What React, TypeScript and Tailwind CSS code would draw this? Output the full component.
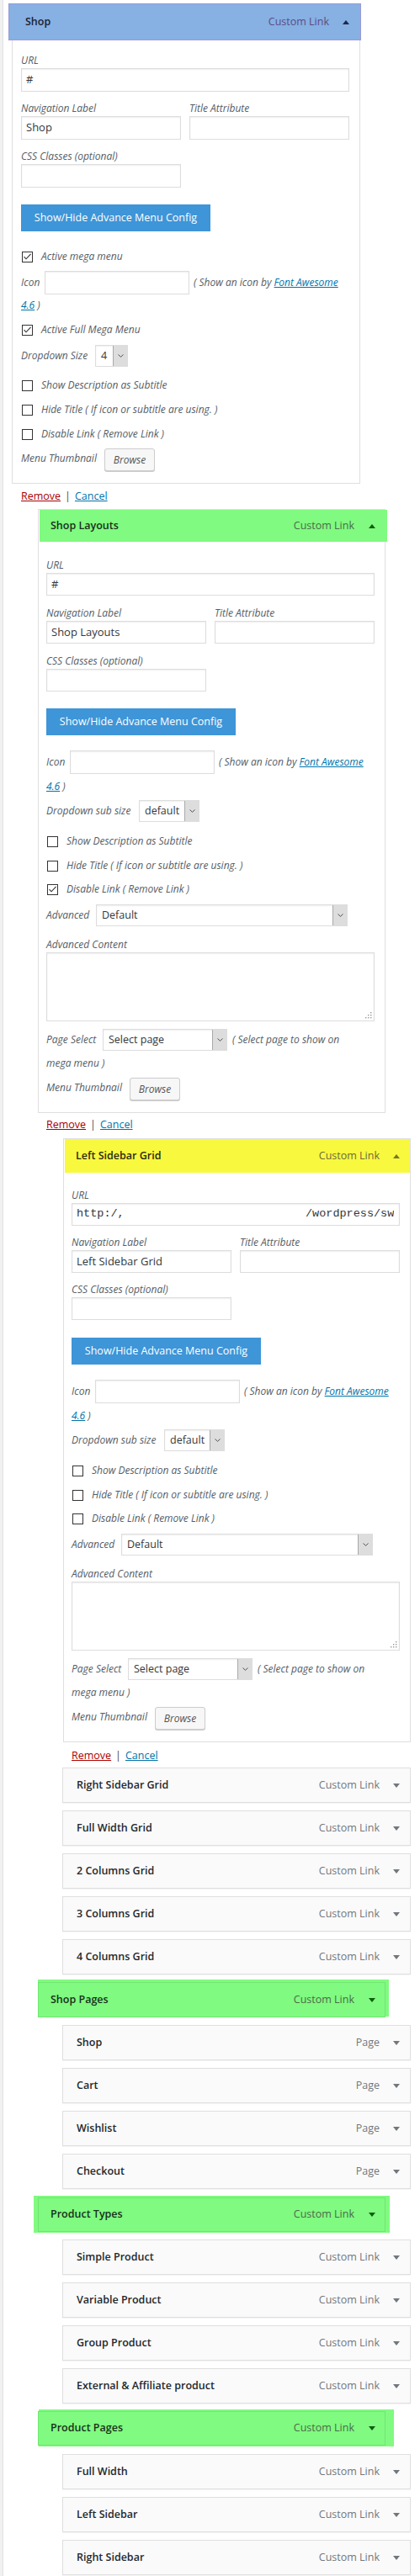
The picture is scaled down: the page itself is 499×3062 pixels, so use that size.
import React from "react";

const Tri = ({ up, color }: { up?: boolean; color: string }) => (
  <svg width="8" height="5" viewBox="0 0 8 5" className="shrink-0">
    <path d={up ? "M0 5L4 0L8 5Z" : "M0 0L8 0L4 5Z"} fill={color} />
  </svg>
);

function Check({ checked }: { checked?: boolean }) {
  return (
    <span className="ml-[1px] flex h-[13px] w-[13px] shrink-0 items-center justify-center border border-[#333] bg-white">
      {checked && (
        <svg width="11" height="11" viewBox="0 0 11 11">
          <path d="M1.5 5.2L4 7.8L9.6 1.8" fill="none" stroke="#333" strokeWidth="1.1" />
        </svg>
      )}
    </span>
  );
}

const LBL = "text-[12px] italic text-[#555d66] whitespace-nowrap";

function Label({ children }: { children: React.ReactNode }) {
  return <div className={`h-[18px] leading-[18px] ${LBL}`}>{children}</div>;
}

function TextInput({ h, children, mono }: { h: string; children?: React.ReactNode; mono?: boolean }) {
  return (
    <div
      className={`${h} flex items-center border border-[#ddd] bg-white pl-[5px] pr-[6px] shadow-[inset_0_1px_2px_rgba(0,0,0,0.07)] ${
        mono ? "font-['Liberation_Mono',monospace] text-[13.5px]" : "text-[13px]"
      } text-[#32373c]`}
    >
      <div className="flex w-full overflow-hidden whitespace-nowrap">{children}</div>
    </div>
  );
}

function Select({ w, value }: { w: string; value: string }) {
  return (
    <div className={`${w} flex h-[26px] shrink-0 border border-[#ddd] bg-white shadow-[inset_0_1px_2px_rgba(0,0,0,0.07)]`}>
      <span className="flex flex-1 items-center pl-[6px] text-[12.5px] text-[#32373c]">{value}</span>
      <span className="flex w-[17px] items-center justify-center border-l border-[#a9a9a9] bg-[#dddddd]">
        <svg width="7" height="4" viewBox="0 0 7 4">
          <path d="M0.5 0.5L3.5 3.3L6.5 0.5" fill="none" stroke="#444" strokeWidth="0.9" />
        </svg>
      </span>
    </div>
  );
}

function CheckRow({ mt, checked, label }: { mt: string; checked?: boolean; label: string }) {
  return (
    <div className={`${mt} flex h-[20px] items-center gap-[10px]`}>
      <Check checked={checked} />
      <span className={LBL}>{label}</span>
    </div>
  );
}

function IconRow({ mt }: { mt: string }) {
  return (
    <div className={`${mt} flex h-[28px] items-center`}>
      <span className={`w-[28px] ${LBL}`}>Icon</span>
      <div className="h-[28px] w-[172px] border border-[#ddd] bg-white shadow-[inset_0_1px_2px_rgba(0,0,0,0.07)]" />
      <span className={`ml-[5px] ${LBL}`}>
        ( Show an icon by <span className="text-[#0073aa] underline">Font Awesome</span>
      </span>
    </div>
  );
}

function FaLine({ mt }: { mt: string }) {
  return (
    <div className={`${mt} flex h-[20px] items-center ${LBL}`}>
      <span className="text-[#0073aa] underline">4.6</span>
      <span>&nbsp;)</span>
    </div>
  );
}

function Thumb({ mt }: { mt: string }) {
  return (
    <div className={`${mt} flex h-[27px] items-center`}>
      <span className={`w-[99px] -mt-[3px] ${LBL}`}>Menu Thumbnail</span>
      <div className="flex h-[27px] w-[60px] items-center justify-center rounded-[3px] border border-[#ccc] bg-[#f7f7f7] text-[12px] italic text-[#555] shadow-[0_1px_0_#ccc]">
        Browse
      </div>
    </div>
  );
}

type BodyProps = {
  variant: "top" | "sub";
  inputH: string;
  gap1: string;
  gap2: string;
  btnMt: string;
  navValue: string;
  url: React.ReactNode;
  mono?: boolean;
  disableChecked?: boolean;
};

function Body({ variant, inputH, gap1, gap2, btnMt, navValue, url, mono, disableChecked }: BodyProps) {
  return (
    <>
      <Label>URL</Label>
      <TextInput h={inputH} mono={mono}>
        {url}
      </TextInput>
      <div className={`grid grid-cols-2 gap-x-[10px] ${gap1}`}>
        <div>
          <Label>Navigation Label</Label>
          <TextInput h={inputH}>{navValue}</TextInput>
        </div>
        <div>
          <Label>Title Attribute</Label>
          <TextInput h={inputH} />
        </div>
      </div>
      <div className={gap2}>
        <Label>CSS Classes (optional)</Label>
        <div className="w-[190px]">
          <TextInput h={inputH} />
        </div>
      </div>
      <div className={`${btnMt} flex h-[32px] w-[225px] items-center justify-center bg-[#3e95d8] text-[12.5px] text-white`}>
        Show/Hide Advance Menu Config
      </div>
      {variant === "top" ? (
        <>
          <CheckRow mt="mt-[20px]" checked label="Active mega menu" />
          <IconRow mt="mt-[7px]" />
          <FaLine mt="mt-[3px]" />
          <CheckRow mt="mt-[9px]" checked label="Active Full Mega Menu" />
          <div className="mt-[8px] flex h-[26px] items-center">
            <span className={`w-[88px] ${LBL}`}>Dropdown Size</span>
            <Select w="w-[39px]" value="4" />
          </div>
          <CheckRow mt="mt-[12px]" label="Show Description as Subtitle" />
          <CheckRow mt="mt-[9px]" label="Hide Title ( If icon or subtitle are using. )" />
          <CheckRow mt="mt-[9px]" label="Disable Link ( Remove Link )" />
          <Thumb mt="mt-[7px]" />
        </>
      ) : (
        <>
          <IconRow mt="mt-[18px]" />
          <FaLine mt="mt-[5px]" />
          <div className="mt-[6px] flex h-[26px] items-center">
            <span className={`w-[110px] ${LBL}`}>Dropdown sub size</span>
            <Select w="w-[72px]" value="default" />
          </div>
          <CheckRow mt="mt-[13px]" label="Show Description as Subtitle" />
          <CheckRow mt="mt-[9px]" label="Hide Title ( If icon or subtitle are using. )" />
          <CheckRow mt="mt-[8px]" checked={disableChecked} label="Disable Link ( Remove Link )" />
          <div className="mt-[8px] flex h-[26px] items-center">
            <span className={`w-[59px] ${LBL}`}>Advanced</span>
            <Select w="w-[299px]" value="Default" />
          </div>
          <div className="mt-[13px]">
            <Label>Advanced Content</Label>
            <div className="flex h-[82px] items-end justify-end border border-[#ddd] bg-white p-[2px] shadow-[inset_0_1px_2px_rgba(0,0,0,0.07)]">
              <svg width="8" height="8" viewBox="0 0 8 8" fill="#9a9a9a">
                <rect x="6" y="0" width="1.4" height="1.4" />
                <rect x="3" y="3" width="1.4" height="1.4" />
                <rect x="6" y="3" width="1.4" height="1.4" />
                <rect x="0" y="6" width="1.4" height="1.4" />
                <rect x="3" y="6" width="1.4" height="1.4" />
                <rect x="6" y="6" width="1.4" height="1.4" />
              </svg>
            </div>
          </div>
          <div className="mt-[9px] flex h-[26px] items-center">
            <span className={`w-[67px] ${LBL}`}>Page Select</span>
            <Select w="w-[148px]" value="Select page" />
            <span className={`ml-[6px] ${LBL}`}>( Select page to show on</span>
          </div>
          <div className={`mt-[5px] flex h-[20px] items-center ${LBL}`}>mega menu )</div>
          <Thumb mt="mt-[7px]" />
        </>
      )}
    </>
  );
}

function RemoveRow({ cls }: { cls: string }) {
  return (
    <div className={`${cls} flex h-[20px] items-center text-[12.5px]`}>
      <span className="text-[#a00] underline">Remove</span>
      <span className="mx-[5px] text-[#444]">|</span>
      <span className="text-[#0073aa] underline">Cancel</span>
    </div>
  );
}

function Collapsed({ title, type = "Custom Link", mt }: { title: string; type?: string; mt: string }) {
  return (
    <div
      className={`${mt} ml-[70px] flex h-[42px] w-[414px] items-center border border-[#dfdfdf] bg-[#fafafa] pl-[16px] pr-[12px] pt-[1px] shadow-[0_1px_1px_rgba(0,0,0,0.04)]`}
    >
      <span className="text-[12.5px] font-semibold text-[#23282d]">{title}</span>
      <span className="ml-auto text-[12.5px] text-[#72777c]">{type}</span>
      <span className="ml-[16px] flex">
        <Tri color="#72777c" />
      </span>
    </div>
  );
}

function GroupInner({ title, extra }: { title: string; extra: string }) {
  return (
    <div className={`${extra} flex w-[413px] items-center border border-[#72e672] pl-[14px] pr-[11px]`}>
      <span className="text-[12.5px] font-semibold text-[#17301a]">{title}</span>
      <span className="ml-auto text-[12.5px] text-[#4b6a4b]">Custom Link</span>
      <span className="ml-[17px] flex">
        <Tri color="#0b5e0b" />
      </span>
    </div>
  );
}

export default function App() {
  return (
    <div className="min-h-[3062px] bg-[#f1f1f1] pl-[3px] font-['Open_Sans',sans-serif]">
      <div className="min-h-[3062px] border-l border-[#e2e2e2] bg-white pt-[4px]">
        {/* Item 1 : Shop */}
        <div className="ml-[10px] w-[414px]">
          <div className="-ml-[4px] flex h-[44px] w-[419px] items-center border border-[#9a9ad6] bg-[#87b0e3] pl-[19px] pr-[13px]">
            <span className="text-[12.5px] font-semibold text-[#1b2230]">Shop</span>
            <span className="ml-auto text-[12.5px] text-[#5a4c84]">Custom Link</span>
            <span className="ml-[16px] flex">
              <Tri up color="#1b2a4a" />
            </span>
          </div>
          <div className="border-x border-b border-[#dfdfdf] pb-[14px] pl-[10px] pr-[12px] pt-[15px]">
            <Body
              variant="top"
              inputH="h-[28px]"
              gap1="mt-[11px]"
              gap2="mt-[11px]"
              btnMt="mt-[20px]"
              navValue="Shop"
              url="#"
            />
          </div>
          <RemoveRow cls="mt-[5px] pl-[11px]" />
        </div>

        {/* Item 2 : Shop Layouts */}
        <div className="ml-[41px] mt-[5px] w-[413px]">
          <div className="border-x border-t border-[#dfdfdf]">
            <div className="ml-[1px] flex h-[38px] w-[413px] items-center bg-[#80fa80] pl-[13px] pr-[14px]">
              <span className="text-[12.5px] font-semibold text-[#17301a]">Shop Layouts</span>
              <span className="ml-auto text-[12.5px] text-[#4b6a4b]">Custom Link</span>
              <span className="ml-[17px] flex">
                <Tri up color="#0b5e0b" />
              </span>
            </div>
          </div>
          <div className="border-x border-b border-[#dfdfdf] pb-[14px] pl-[9px] pr-[12px] pt-[19px]">
            <Body
              variant="sub"
              inputH="h-[27px]"
              gap1="mt-[12px]"
              gap2="mt-[12px]"
              btnMt="mt-[20px]"
              navValue="Shop Layouts"
              url="#"
              disableChecked
            />
          </div>
          <RemoveRow cls="mt-[4px] pl-[10px]" />
        </div>

        {/* Item 3 : Left Sidebar Grid */}
        <div className="ml-[71px] mt-[6px] w-[413px]">
          <div className="border-x border-t border-[#dfdfdf]">
            <div className="ml-[1px] flex h-[40px] w-[410px] items-center bg-[#f8f83e] pl-[13px] pr-[12px]">
              <span className="text-[12.5px] font-semibold text-[#2a2a14]">Left Sidebar Grid</span>
              <span className="ml-auto text-[12.5px] text-[#6b6b3c]">Custom Link</span>
              <span className="ml-[16px] flex">
                <Tri up color="#77772a" />
              </span>
            </div>
          </div>
          <div className="border-x border-b border-[#dfdfdf] pb-[14px] pl-[9px] pr-[12px] pt-[18px]">
            <Body
              variant="sub"
              inputH="h-[27px]"
              gap1="mt-[11px]"
              gap2="mt-[11px]"
              btnMt="mt-[21px]"
              navValue="Left Sidebar Grid"
              mono
              url={
                <>
                  <span className="w-[272px] shrink-0">http:/,</span>
                  <span>/wordpress/sw</span>
                </>
              }
            />
          </div>
          <RemoveRow cls="mt-[6px] pl-[10px]" />
        </div>

        <Collapsed mt="mt-[4px]" title="Right Sidebar Grid" />
        <Collapsed mt="mt-[9px]" title="Full Width Grid" />
        <Collapsed mt="mt-[9px]" title="2 Columns Grid" />
        <Collapsed mt="mt-[9px]" title="3 Columns Grid" />
        <Collapsed mt="mt-[9px]" title="4 Columns Grid" />

        <div className="ml-[41px] mt-[6px] h-[44px] w-[417px] bg-[#80fa80] pt-[3px]">
          <GroupInner title="Shop Pages" extra="h-[42px]" />
        </div>
        <Collapsed mt="mt-[10px]" title="Shop" type="Page" />
        <Collapsed mt="mt-[9px]" title="Cart" type="Page" />
        <Collapsed mt="mt-[9px]" title="Wishlist" type="Page" />
        <Collapsed mt="mt-[9px]" title="Checkout" type="Page" />

        <div className="ml-[36px] mt-[8px] h-[44px] w-[423px] bg-[#80fa80] pl-[5px] pt-[2px]">
          <GroupInner title="Product Types" extra="h-[41px]" />
        </div>
        <Collapsed mt="mt-[8px]" title="Simple Product" />
        <Collapsed mt="mt-[9px]" title="Variable Product" />
        <Collapsed mt="mt-[9px]" title="Group Product" />
        <Collapsed mt="mt-[9px]" title="External & Affiliate product" />

        <div className="ml-[42px] mt-[7px] h-[44px] w-[422px] bg-[#80fa80] pt-[2px]">
          <GroupInner title="Product Pages" extra="-ml-[1px] h-[41px]" />
        </div>
        <Collapsed mt="mt-[9px]" title="Full Width" />
        <Collapsed mt="mt-[9px]" title="Left Sidebar" />
        <Collapsed mt="mt-[9px]" title="Right Sidebar" />
      </div>
    </div>
  );
}
